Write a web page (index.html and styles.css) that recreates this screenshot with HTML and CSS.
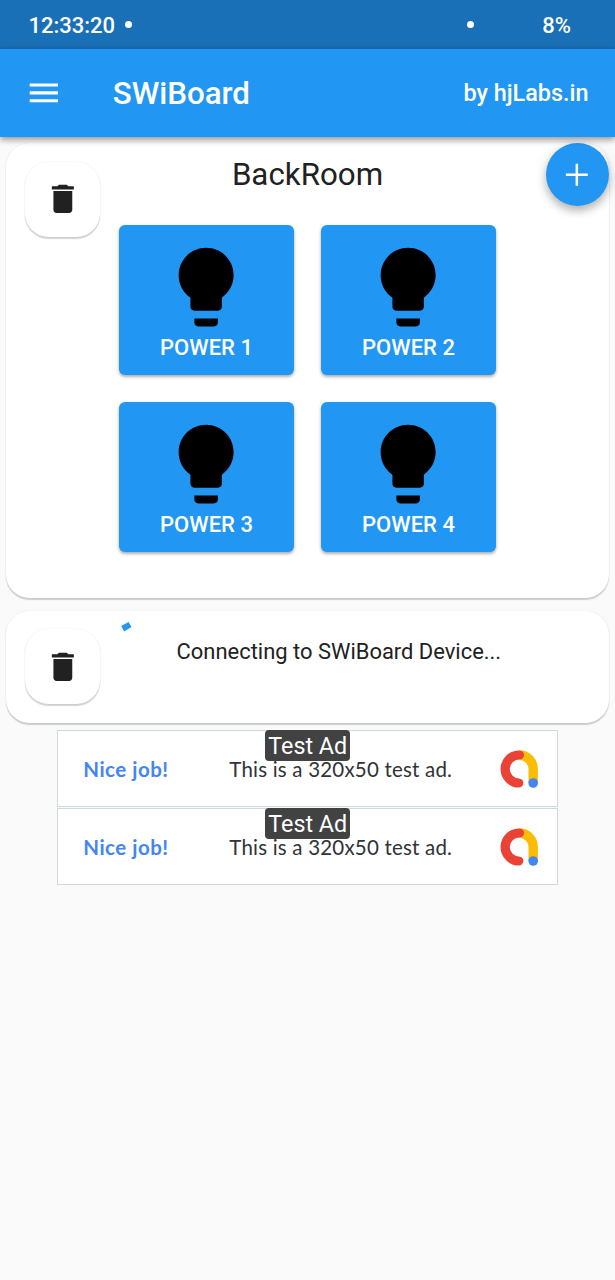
FILE: index.html
```html
<!DOCTYPE html>
<html lang="en">
<head>
<meta charset="utf-8">
<title>SWiBoard</title>
<link rel="stylesheet" href="styles.css">
</head>
<body>
<svg width="0" height="0" class="defs">
  <symbol id="trash" viewBox="0 0 24 24"><path d="M6 19c0 1.100.9 2 2 2h8c1.100 0 2-.9 2-2V7H6v12zM19 4h-3.500l-1-1h-5l-1 1H5v2h14V4z"/></symbol>
  <symbol id="bulb" viewBox="0 0 24 24"><path d="M9 21c0 .5.4 1 1 1h4c.6 0 1-.5 1-1v-1H9v1zm3-19C8.100 2 5 5.100 5 9c0 2.400 1.200 4.500 3 5.700V17c0 .5.4 1 1 1h6c.6 0 1-.5 1-1v-2.300c1.800-1.300 3-3.400 3-5.700 0-3.900-3.100-7-7-7z"/></symbol>
  <symbol id="admob" viewBox="0 0 40 40">
    <path d="M20.200 6A14 14 0 0 1 34.200 20V34" fill="none" stroke="#fbbc04" stroke-width="9.400"/>
    <path d="M20.500 6A14 14 0 1 0 19.800 34" fill="none" stroke="#ea4335" stroke-width="9.200" stroke-linecap="round"/>
    <circle cx="34.200" cy="34" r="4.800" fill="#4285f4"/>
  </symbol>
</svg>
<header class="status">
  <span class="clock">12:33:20</span><i class="dot"></i>
  <i class="dot dot-right"></i><span class="battery">8%</span>
</header>
<nav class="appbar">
  <svg class="menu" viewBox="0 0 24 24"><path d="M3 18h18v-2H3v2zm0-5h18v-2H3v2zm0-7v2h18V6H3z"/></svg>
  <h1 class="title">SWiBoard</h1>
  <span class="byline">by hjLabs.in</span>
</nav>
<main class="content">
  <section class="card room">
    <button class="delete"><svg><use href="#trash"/></svg></button>
    <div class="room-body">
      <h2 class="room-name">BackRoom</h2>
      <div class="switches">
        <button class="switch"><svg><use href="#bulb"/></svg><span>POWER 1</span></button>
        <button class="switch"><svg><use href="#bulb"/></svg><span>POWER 2</span></button>
        <button class="switch"><svg><use href="#bulb"/></svg><span>POWER 3</span></button>
        <button class="switch"><svg><use href="#bulb"/></svg><span>POWER 4</span></button>
      </div>
    </div>
  </section>
  <button class="fab"><svg viewBox="0 0 24 24"><path d="M19 12.800h-6.200v6.200h-1.600v-6.200H5v-1.600h6.200V5h1.600v6.200h6.200z"/></svg></button>
  <section class="card pending">
    <button class="delete"><svg><use href="#trash"/></svg></button>
    <svg class="spinner" viewBox="0 0 12 12"><path d="M1.100 5.100L8.600 1L11.500 5.900L4.200 10.600Z"/></svg>
    <p class="message">Connecting to SWiBoard Device...</p>
  </section>
  <div class="ads">
    <div class="ad">
      <span class="ad-tag"><span>Test Ad</span></span>
      <span class="ad-cta">Nice job!</span>
      <span class="ad-text">This is a 320x50 test ad.</span>
      <svg class="ad-logo"><use href="#admob"/></svg>
    </div>
    <div class="ad">
      <span class="ad-tag"><span>Test Ad</span></span>
      <span class="ad-cta">Nice job!</span>
      <span class="ad-text">This is a 320x50 test ad.</span>
      <svg class="ad-logo"><use href="#admob"/></svg>
    </div>
  </div>
</main>
</body>
</html>
```
FILE: styles.css
```css
* { box-sizing: border-box; }
body { margin: 0; height: 1280px; background: #fafafa; color: #212121; font-family: Roboto, sans-serif; overflow: hidden; }
h1, h2, p { margin: 0; font-weight: 400; white-space: nowrap; }
button { border: 0; padding: 0; font: inherit; }
span { white-space: nowrap; }
.defs { position: absolute; }

.status { display: flex; align-items: center; height: 49px; padding: 2px 44px 0 28.500px; background: #1a70b7; color: #fff; font-size: 22px; font-weight: 500; }
.clock { width: 96px; }
.dot { width: 7px; height: 7px; margin-top: -3px; border-radius: 50%; background: #fff; }
.dot-right { margin-left: auto; margin-right: 68.500px; }

.appbar { position: relative; z-index: 2; display: flex; align-items: center; height: 88px; padding: 0 26.500px 0 25px; background: #2196f3; color: #fff; box-shadow: 0 3px 6px rgba(0,0,0,.3), 0 1px 8px rgba(0,0,0,.14); }
.menu { width: 37.700px; height: 37.700px; fill: #fff; }
.title { margin-left: 50px; padding-top: 1px; font-size: 31.300px; font-weight: 500; }
.byline { margin-left: auto; font-size: 23.400px; font-weight: 500; }

.content { position: relative; padding: 6px 6.300px 0; }
.card { display: flex; align-items: flex-start; padding: 18.800px; background: #fff; border-radius: 23.600px; box-shadow: 0 1.200px 1.200px rgba(0,0,0,.18), 0 0 2px rgba(0,0,0,.07); }
.room { height: 454.500px; }
.delete { display: grid; place-items: center; flex: none; width: 75px; height: 75px; background: #fff; border-radius: 23.600px; box-shadow: 0 1.200px 1.200px rgba(0,0,0,.18), 0 0 2px rgba(0,0,0,.07); }
.delete svg { width: 37.700px; height: 37.700px; fill: #212121; }
.room-body { width: 377px; margin-left: 18.900px; margin-top: -6px; }
.room-name { height: 69px; line-height: 37px; text-align: center; font-size: 31.300px; }
.switches { display: grid; grid-template-columns: 175.500px 175.500px; grid-auto-rows: 150.500px; gap: 26.500px; }
.switch { display: flex; flex-direction: column; align-items: center; padding: 15px .5px 0 0; border-radius: 6px; background: #2196f3; color: #fff; font-size: 22px; font-weight: 500; box-shadow: 0 2px 3px rgba(0,0,0,.26), 0 1px 4px rgba(0,0,0,.1); }
.switch svg { width: 94.300px; height: 94.300px; fill: #000; }
.switch span { padding-top: .5px; line-height: 26px; }
.fab { position: absolute; top: 6px; right: 6.500px; display: grid; place-items: center; width: 63px; height: 63px; border-radius: 50%; background: #2196f3; box-shadow: 0 5px 9px rgba(0,0,0,.24), 0 2px 14px rgba(0,0,0,.1); }
.fab svg { width: 37.700px; height: 37.700px; fill: #fff; }

.pending { height: 112.500px; margin-top: 13px; }
.spinner { width: 12px; height: 12px; margin: -8.500px 0 0 19.500px; fill: #2196f3; }
.message { margin: 10px 0 0 45px; line-height: 26px; font-size: 21.930px; }

.ads { display: grid; gap: 1px; width: 500.500px; margin: 6.500px auto 0; }
.ad { position: relative; display: flex; align-items: center; height: 77.300px; padding: 1.500px 18px 0 25px; border: 1px solid #cfd8dc; background: #fff; font-family: Lato, sans-serif; }
.ad-tag { position: absolute; top: -1px; left: 207px; display: grid; place-items: center; width: 85px; height: 31.500px; border-radius: 4px; background: #424242; color: #fff; font: 400 23.300px Roboto, sans-serif; }
.ad-tag span { padding-top: 1px; }
.ad-cta { width: 146px; color: #4285f4; font-size: 20.500px; font-weight: 700; letter-spacing: .5px; }
.ad-text { color: #303337; font-size: 20.500px; font-weight: 400; letter-spacing: .2px; }
.ad-logo { width: 40px; height: 40px; margin-left: auto; }
```
